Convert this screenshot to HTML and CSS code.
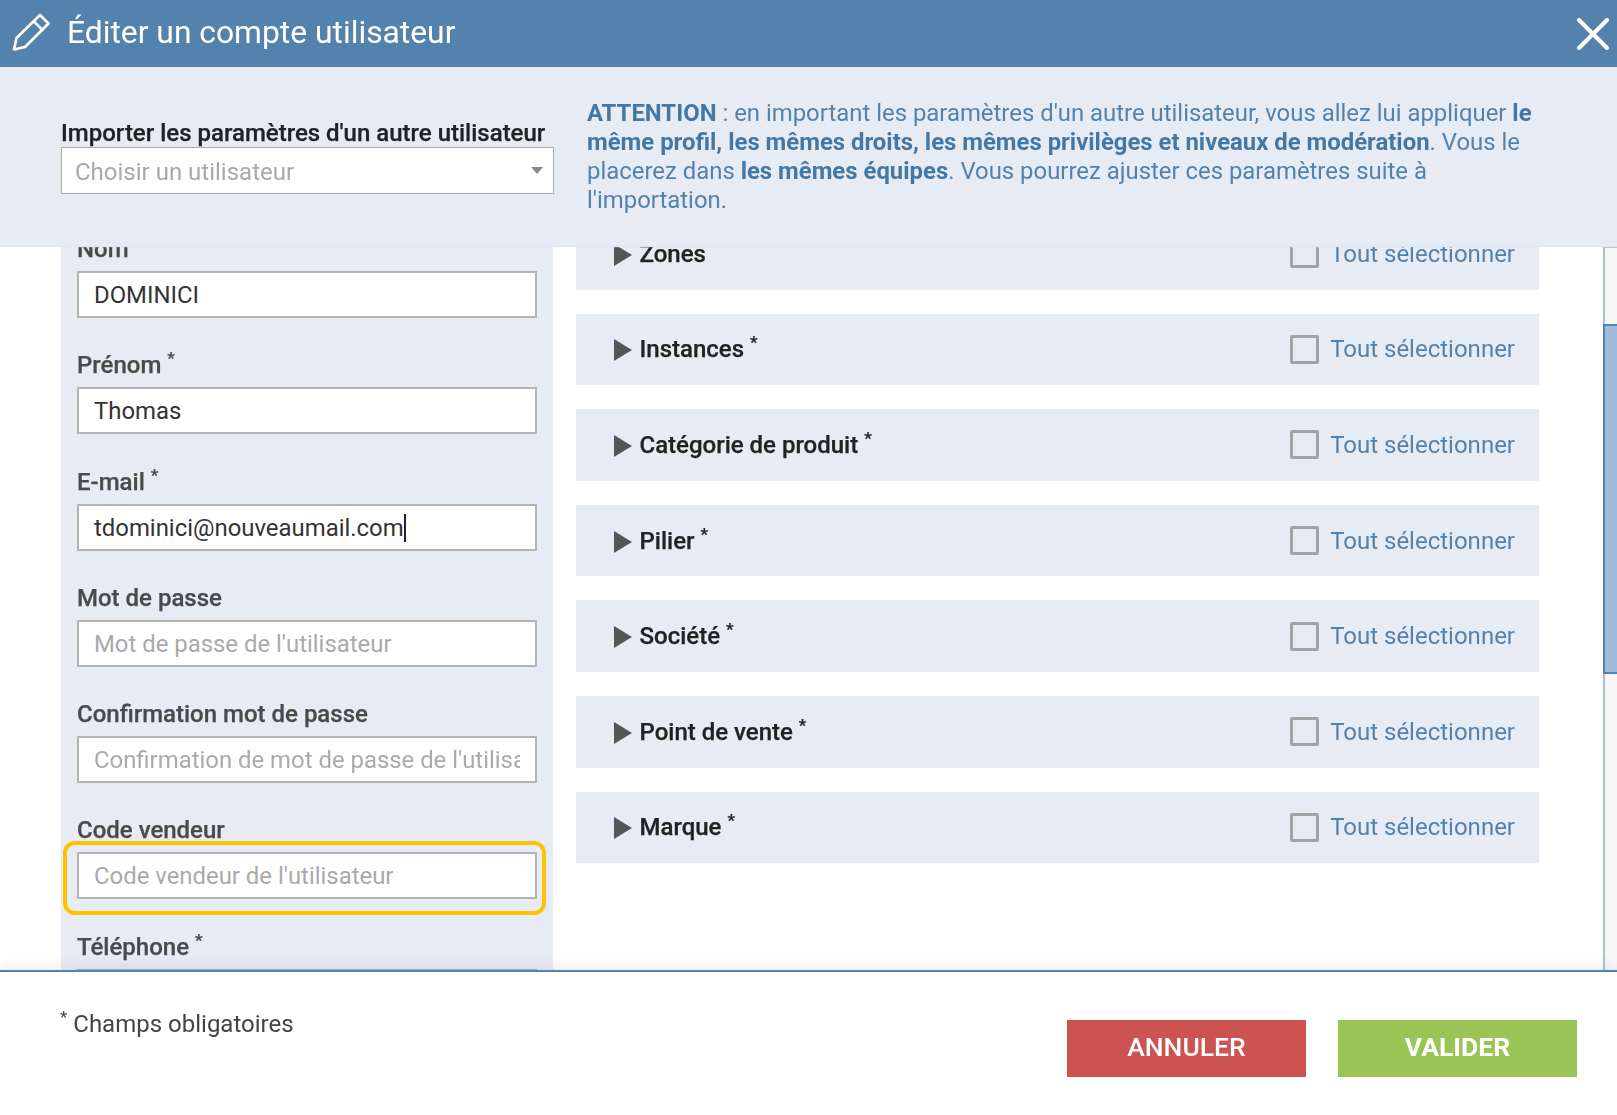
FILE: index.html
```html
<!DOCTYPE html>
<html lang="fr">
<head>
<meta charset="utf-8">
<title>Éditer un compte utilisateur</title>
<link rel="stylesheet" href="styles.css">
</head>
<body>
<div class="modal">
  <header class="topbar">
    <svg class="pencil" viewBox="0 0 38 38" width="38" height="38" fill="none" stroke="#fff" stroke-width="2.6" stroke-linejoin="round" stroke-linecap="round"><path d="M2 36.5 L4.5 25 L28 2 L36.5 10.5 L13 34 Z"/><path d="M22 8.5 L30.5 17"/></svg>
    <h1 class="title">Éditer un compte utilisateur</h1>
    <svg class="close" viewBox="0 0 32 32" width="32" height="32" stroke="#fff" stroke-width="4" stroke-linecap="round"><path d="M2 2 L30 30 M30 2 L2 30"/></svg>
  </header>
  <section class="import">
    <div class="import-left">
      <label class="import-label">Importer les paramètres d'un autre utilisateur</label>
      <div class="select"><span>Choisir un utilisateur</span><i class="caret"></i></div>
    </div>
    <p class="notice"><b>ATTENTION</b> : en important les paramètres d'un autre utilisateur, vous allez lui appliquer <b>le même profil, les mêmes droits, les mêmes privilèges et niveaux de modération</b>. Vous le placerez dans <b>les mêmes équipes</b>. Vous pourrez ajuster ces paramètres suite à l'importation.</p>
  </section>
  <main class="scroller">
    <div class="content">
      <form class="fields">
        <div class="field"><label>Nom</label><div class="input value">DOMINICI</div></div>
        <div class="field"><label>Prénom <sup>*</sup></label><div class="input value">Thomas</div></div>
        <div class="field"><label>E-mail <sup>*</sup></label><div class="input value"><span class="typed">tdominici@nouveaumail.com</span></div></div>
        <div class="field"><label>Mot de passe</label><div class="input">Mot de passe de l'utilisateur</div></div>
        <div class="field"><label>Confirmation mot de passe</label><div class="input"><span class="clip">Confirmation de mot de passe de l'utilisateur</span></div></div>
        <div class="field"><label>Code vendeur</label><div class="input marked">Code vendeur de l'utilisateur</div></div>
        <div class="field"><label>Téléphone <sup>*</sup></label><div class="input"></div></div>
      </form>
      <div class="groups">
        <div class="group"><span class="arrow"></span><span class="name">Zones</span><span class="box"></span><span class="all">Tout sélectionner</span></div>
        <div class="group"><span class="arrow"></span><span class="name">Instances <sup>*</sup></span><span class="box"></span><span class="all">Tout sélectionner</span></div>
        <div class="group"><span class="arrow"></span><span class="name">Catégorie de produit <sup>*</sup></span><span class="box"></span><span class="all">Tout sélectionner</span></div>
        <div class="group"><span class="arrow"></span><span class="name">Pilier <sup>*</sup></span><span class="box"></span><span class="all">Tout sélectionner</span></div>
        <div class="group"><span class="arrow"></span><span class="name">Société <sup>*</sup></span><span class="box"></span><span class="all">Tout sélectionner</span></div>
        <div class="group"><span class="arrow"></span><span class="name">Point de vente <sup>*</sup></span><span class="box"></span><span class="all">Tout sélectionner</span></div>
        <div class="group"><span class="arrow"></span><span class="name">Marque <sup>*</sup></span><span class="box"></span><span class="all">Tout sélectionner</span></div>
      </div>
    </div>
    <div class="scrolltrack"><div class="scrollthumb"></div></div>
  </main>
  <footer class="footer">
    <p class="required"><sup>*</sup> Champs obligatoires</p>
    <div class="actions">
      <button class="btn cancel" type="button">ANNULER</button>
      <button class="btn confirm" type="button">VALIDER</button>
    </div>
  </footer>
</div>
</body>
</html>
```
FILE: styles.css
```css
* { box-sizing: border-box; }
html, body { margin: 0; padding: 0; background: #fff; }
body { font-family: Roboto, "Liberation Sans", sans-serif; color: #333; overflow: hidden; }
.modal { width: 1617px; height: 1115px; display: flex; flex-direction: column; filter: blur(0.4px); }

.topbar { height: 67px; flex: none; background: #5383ad; display: flex; align-items: center; padding: 0 8px 0 12px; position: relative; z-index: 2; }
.pencil { flex: none; margin: 0 17px 4px 0; }
.title { margin: 0 0 3px; flex: 1; font-size: 31.8px; font-weight: 400; color: #fff; }
.close { flex: none; }

.import { height: 179px; flex: none; background: #e7ebf4; display: flex; padding: 32px 78px 0 61px; position: relative; z-index: 2; box-shadow: 0 1px 1px #dfe5f0; }
.import-left { width: 493px; flex: none; padding-top: 20px; }
.import-label { display: block; font-size: 24px; font-weight: 500; color: #222; line-height: 28px; white-space: nowrap; -webkit-text-stroke: 0.25px #222; }
.select { height: 47px; background: #fff; border: 1.5px solid #aaa; display: flex; align-items: center; justify-content: space-between; padding: 0 10px 0 13px; font-size: 24px; color: #a9a9a9; }
.select span { padding-top: 2px; }
.caret { width: 0; height: 0; border-left: 6px solid transparent; border-right: 6px solid transparent; border-top: 7px solid #888; }
.notice { margin: 0 0 0 33px; flex: 1; font-size: 23.9px; line-height: 28.9px; color: #5383ad; }
.notice b { font-weight: 700; color: #4478a4; }

.scroller { flex: 1; min-height: 0; overflow: hidden; position: relative; }
.content { display: flex; padding-left: 61px; margin-top: -28px; }

.fields { width: 492px; flex: none; background: #e7ebf4; padding: 5px 16px 60px 16px; }
.field { height: 116.3px; padding-top: 13px; }
.field label { display: block; height: 35px; font-size: 24px; font-weight: 500; line-height: 27px; color: #4a4a4a; -webkit-text-stroke: 0.25px #4a4a4a; }
.field sup, .name sup { font-size: 17px; line-height: 0; vertical-align: 9px; }
.input { position: relative; height: 47px; background: #fff; border: 2px solid #b4b4b4; padding: 0 15px; font-size: 23.9px; line-height: 45px; color: #aaa; white-space: nowrap; }
.input.value { color: #333; }
.typed { border-right: 2px solid #222; }
.clip { display: block; overflow: hidden; width: 426px; }
.marked::after { content: ""; position: absolute; left: -16px; right: -11px; top: -13px; bottom: -18px; border: 4px solid #fcc400; border-radius: 12px; }

.groups { width: 963px; flex: none; margin-left: 23px; display: flex; flex-direction: column; gap: 24px; }
.group { height: 71.6px; flex: none; background: #e7ebf4; display: flex; align-items: center; padding: 0 24px 0 38px; }
.arrow { width: 0; height: 0; flex: none; border-left: 18px solid #555; border-top: 11px solid transparent; border-bottom: 11px solid transparent; margin: 2px 7.5px 0 0; }
.name { flex: 1; font-size: 24px; font-weight: 500; color: #222; -webkit-text-stroke: 0.25px #222; }
.box { width: 29px; height: 29px; flex: none; border: 3px solid #a3a3a3; border-radius: 2px; margin-right: 11px; }
.all { font-size: 24px; color: #5383ad; }

.scrolltrack { position: absolute; left: 1603px; top: 0; bottom: 0; width: 14px; background: #f7f7f8; border-left: 2px solid #a9c0dc; border-top: 2px solid #a9c0dc; }
.scrollthumb { position: absolute; left: -2px; right: 0; top: 76px; height: 350px; background: #a3bcd9; border: 2px solid #5383ad; border-right: 0; }

.footer { height: 145px; flex: none; border-top: 2px solid #5383ad; background: #fff; display: flex; justify-content: space-between; padding: 0 40px 0 60px; position: relative; box-shadow: 0 -6px 10px rgba(0,0,0,0.06); }
.required { margin: 38px 0 0; font-size: 24px; color: #444; }
.required sup { font-size: 17px; line-height: 0; vertical-align: 9px; }
.actions { display: flex; gap: 32px; padding-top: 48px; }
.btn { width: 239px; height: 57px; border: 0; color: #fff; font-family: inherit; font-size: 26.5px; font-weight: 500; padding: 0 0 5px; }
.cancel { background: #cd5353; }
.confirm { background: #9ac455; font-weight: 700; }
```
